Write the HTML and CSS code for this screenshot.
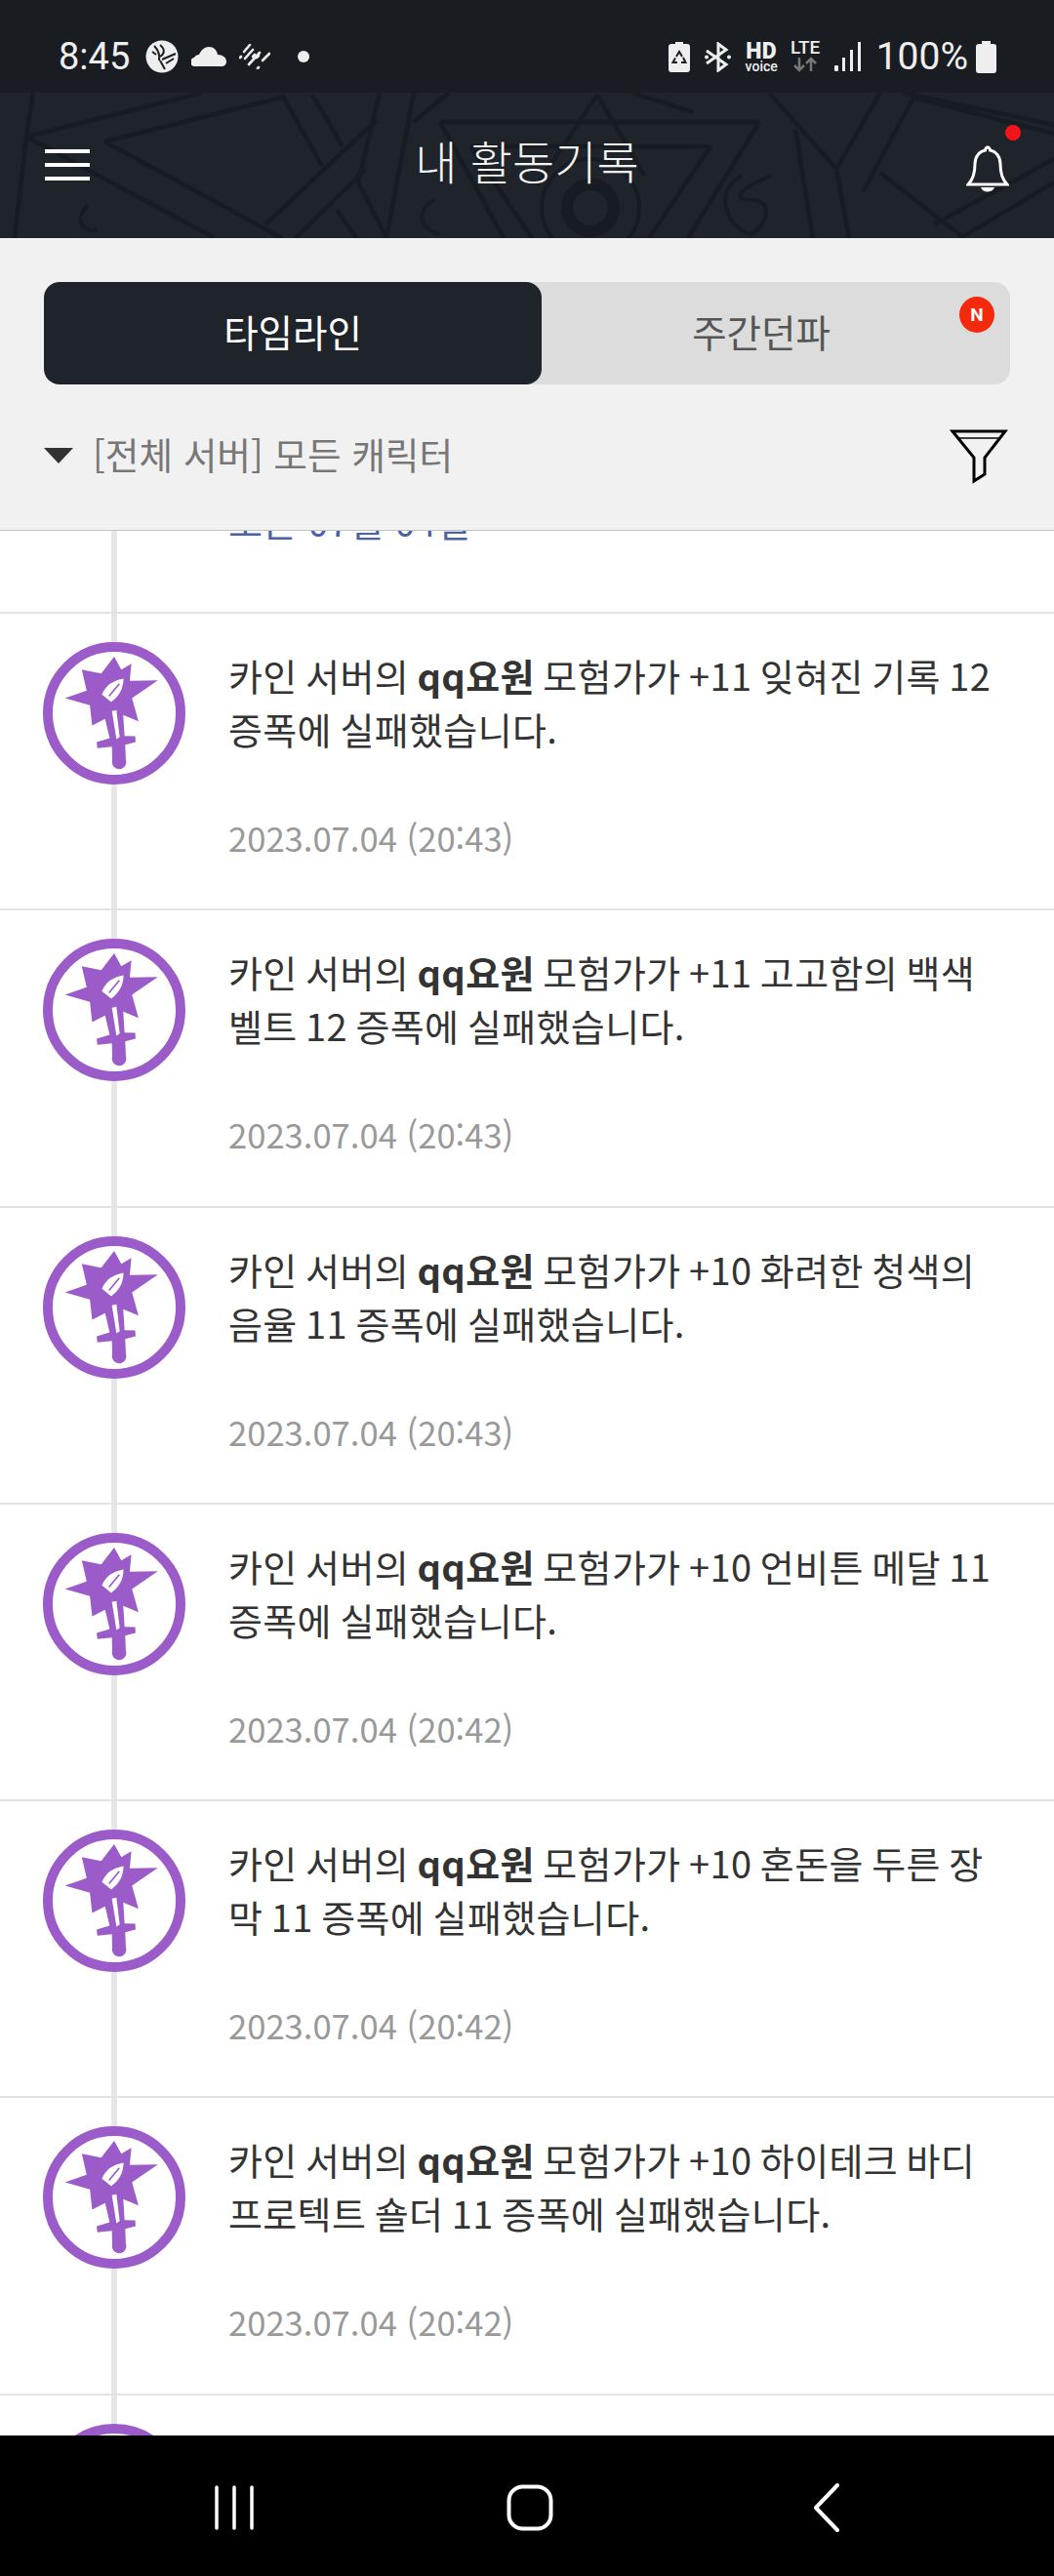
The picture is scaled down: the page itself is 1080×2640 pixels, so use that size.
FILE: index.html
```html
<!DOCTYPE html>
<html lang="ko">
<head>
<meta charset="utf-8">
<title>내 활동기록</title>
<link rel="stylesheet" href="styles.css">
</head>
<body>
<svg class="defs" width="0" height="0" aria-hidden="true">
  <symbol id="guild" viewBox="70 55 440 440">
    <circle cx="290" cy="275" r="205" fill="#fff" stroke="#9b5bc9" stroke-width="30"/>
    <path fill="#9b5bc9" d="M290 100 L312 140 L343 122 L338 175 L425 173 L345 228 L365 300 L318 280 L322 345 L355 346 L356 364 L324 372 L326 418 A22 22 0 1 1 284 420 L283 378 L238 383 L236 364 L276 352 L262 292 L222 313 L215 250 L138 228 L205 205 L190 140 L250 152 Z"/>
    <path fill="#fff" d="M319 168 C290 174 266 184 252 217 L281 240 C305 222 318 200 319 168 Z"/>
    <path fill="none" stroke="#9b5bc9" stroke-width="5" d="M274 222 L306 184"/>
    <path fill="#fff" d="M283 268 L297 265 L307 348 L297 355 Z"/>
  </symbol>
</svg>

<div class="phone">
  <div class="status">
    <div class="status-left">
      <span class="clock">8:45</span>
      <svg class="ic" width="34" height="34" viewBox="0 0 34 34"><circle cx="17" cy="17" r="16.5" fill="#eee"/><path d="M9 6 C13 10 15 14 14 21 M15 5 C20 9 20 14 15 17 M11 15 L7 12 M17 20 L31 14 M21 24 L29 19 M15 21 L20 30" fill="none" stroke="#1a1d22" stroke-width="2"/></svg>
      <svg class="ic" width="36" height="20" viewBox="0 0 36 20"><path fill="#eee" d="M4 20 A4.5 4.5 0 0 1 3 11 C4 9 6 8 8 8 C10 3 14 0 18 0 C23 0 26 3 27 8 C32 8 36 11 36 15 C36 18 34 20 31 20 Z"/></svg>
      <svg class="ic" width="32" height="26" viewBox="0 0 32 26"><g stroke="#eee" stroke-width="2.6" stroke-linecap="round"><path d="M5 8 L11 1"/><path d="M1 14 L2 13"/><path d="M6 15 L14 6"/><path d="M10 21 L21 9"/><path d="M18 14 L20 12"/><path d="M19 25 L20 24"/><path d="M24 17 L31 10"/><path d="M14 13 L16 11"/></g></svg>
      <svg class="ic dot" width="12" height="12" viewBox="0 0 12 12"><circle cx="6" cy="6" r="6" fill="#eee"/></svg>
    </div>
    <div class="status-right">
      <svg class="ic" width="22" height="31" viewBox="0 0 22 31"><path fill="#eee" d="M7 0 H15 V2 H19 Q22 2 22 5 V28 Q22 31 19 31 H3 Q0 31 0 28 V5 Q0 2 3 2 H7 Z"/><path fill="none" stroke="#1a1d22" stroke-width="2" d="M8 15 L11 10 L14 15 M15 16 L17.5 21 H13 M9 21 H4.500 L7 16.500"/></svg>
      <svg class="ic bt" width="27" height="31" viewBox="0 0 27 31"><path fill="none" stroke="#eee" stroke-width="3" d="M2 9 L22 23 L14 29 V2 L22 8 L2 22"/><circle cx="2" cy="15.500" r="2" fill="#eee"/><circle cx="25" cy="15.500" r="2" fill="#eee"/></svg>
      <span class="hd"><b>HD</b><i>voice</i></span>
      <span class="lte"><b>LTE</b><svg width="24" height="16" viewBox="0 0 24 16"><path fill="none" stroke="#777" stroke-width="2.500" d="M6 1 V14 M1 9 L6 14 L11 9 M18 15 V2 M13 7 L18 2 L23 7"/></svg></span>
      <svg class="ic" width="27" height="30" viewBox="0 0 27 30"><rect x="0" y="24" width="4" height="6" rx="1" fill="#eee"/><rect x="8" y="16" width="3" height="14" fill="#eee"/><rect x="16" y="8" width="3" height="22" fill="#eee"/><rect x="24" y="0" width="3" height="30" fill="#eee"/></svg>
      <span class="pct">100%</span>
      <svg class="ic batt" width="21" height="33" viewBox="0 0 21 33"><path fill="#eee" d="M6 0 H15 V3 H18 Q21 3 21 6 V30 Q21 33 18 33 H3 Q0 33 0 30 V6 Q0 3 3 3 H6 Z"/></svg>
    </div>
  </div>

  <header class="topbar">
    <svg class="pattern" viewBox="0 95 1080 149" preserveAspectRatio="none" aria-hidden="true">
      <g fill="none" stroke="#181b21" stroke-width="4.500">
        <path d="M34 95 L27 140 L15 244"/>
        <path d="M27 140 L207 95 M107 145 L289 100"/>
        <path d="M27 140 L220 244 M107 145 L289 244"/>
        <path d="M289 97 L330 170 M320 97 L351 150"/>
        <path d="M272 230 L386 123 M303 244 L375 173"/>
        <path d="M389 95 L367 187 L396 244 L424 95"/>
        <path d="M424 125 L460 95 M345 215 L365 244"/>
        <path d="M451 125 H778 M482 150 H728"/>
        <path d="M451 125 L516 244 M482 150 L545 244"/>
        <path d="M778 125 L705 244 M728 150 L665 244"/>
        <path d="M612 97 L550 190 M612 97 L660 180 M648 95 L710 115"/>
        <path d="M788 95 L857 173 L870 244 M815 133 L833 244"/>
        <path d="M902 95 L857 173 M936 100 L884 197"/>
        <path d="M936 100 L1080 137 M925 95 L1080 128"/>
        <path d="M902 177 L988 244 M957 230 L1080 163 M984 244 L1080 187"/>
        <circle cx="605" cy="213" r="24" stroke-width="12"/>
        <circle cx="605" cy="213" r="50" stroke-width="4"/>
        <path d="M760 180 C730 195 745 235 770 240 C790 225 790 205 770 205 C750 205 755 195 790 180" stroke-width="4"/>
        <path d="M445 205 C425 215 430 235 450 240 M90 210 C75 225 85 240 100 235" stroke-width="4"/>
      </g>
    </svg>
    <div class="burger"><span></span><span></span><span></span></div>
    <h1 class="title">내 활동기록</h1>
    <div class="bell-wrap">
      <svg width="44" height="50" viewBox="0 0 44 50"><path fill="none" stroke="#fff" stroke-width="3" d="M2 41 C8 35 9 28 9 20 C9 12 14 7 19.500 6 A2.500 3 0 0 1 24.500 6 C30 7 35 12 35 20 C35 28 36 35 42 41 Z"/><path fill="#fff" d="M15 44 H29 C27 50 17 50 15 44 Z"/></svg>
      <span class="bell-dot"></span>
    </div>
  </header>

  <section class="controls">
    <div class="tabs">
      <div class="tab tab-active">타임라인</div>
      <div class="tab tab-idle">주간던파<span class="badge">N</span></div>
    </div>
    <div class="filter-row">
      <div class="filter-label"><span class="caret"></span><span>[전체 서버] 모든 캐릭터</span></div>
      <svg width="60" height="56" viewBox="0 0 60 56"><path fill="none" stroke="#000" stroke-width="3" stroke-linejoin="miter" d="M3 2 H57 L36 29 V46 L25 53 V29 Z"/><path stroke="#000" stroke-width="1.500" d="M10 9 H50"/></svg>
    </div>
  </section>

  <main class="feed">
    <div class="stub"><p class="link">오른 07월 04일</p></div>

    <article class="row">
      <svg class="avatar"><use href="#guild"/></svg>
      <div class="body">
        <p class="msg">카인 서버의 <b>qq요원</b> 모험가가 +11 잊혀진 기록 12 증폭에 실패했습니다.</p>
        <time class="date">2023.07.04 (20:43)</time>
      </div>
    </article>
    <article class="row">
      <svg class="avatar"><use href="#guild"/></svg>
      <div class="body">
        <p class="msg">카인 서버의 <b>qq요원</b> 모험가가 +11 고고함의 백색 벨트 12 증폭에 실패했습니다.</p>
        <time class="date">2023.07.04 (20:43)</time>
      </div>
    </article>
    <article class="row">
      <svg class="avatar"><use href="#guild"/></svg>
      <div class="body">
        <p class="msg">카인 서버의 <b>qq요원</b> 모험가가 +10 화려한 청색의 음율 11 증폭에 실패했습니다.</p>
        <time class="date">2023.07.04 (20:43)</time>
      </div>
    </article>
    <article class="row">
      <svg class="avatar"><use href="#guild"/></svg>
      <div class="body">
        <p class="msg">카인 서버의 <b>qq요원</b> 모험가가 +10 언비튼 메달 11 증폭에 실패했습니다.</p>
        <time class="date">2023.07.04 (20:42)</time>
      </div>
    </article>
    <article class="row">
      <svg class="avatar"><use href="#guild"/></svg>
      <div class="body">
        <p class="msg">카인 서버의 <b>qq요원</b> 모험가가 +10 혼돈을 두른 장막 11 증폭에 실패했습니다.</p>
        <time class="date">2023.07.04 (20:42)</time>
      </div>
    </article>
    <article class="row">
      <svg class="avatar"><use href="#guild"/></svg>
      <div class="body">
        <p class="msg">카인 서버의 <b>qq요원</b> 모험가가 +10 하이테크 바디 프로텍트 숄더 11 증폭에 실패했습니다.</p>
        <time class="date">2023.07.04 (20:42)</time>
      </div>
    </article>
    <article class="row">
      <svg class="avatar"><use href="#guild"/></svg>
    </article>
  </main>

  <nav class="navbar">
    <svg width="40" height="46" viewBox="0 0 40 46"><g stroke="#fff" stroke-width="3.500" stroke-linecap="round"><path d="M2 2 V44 M20 2 V44 M38 2 V44"/></g></svg>
    <svg width="48" height="48" viewBox="0 0 48 48"><rect x="2.500" y="2.500" width="43" height="43" rx="14" fill="none" stroke="#fff" stroke-width="4"/></svg>
    <svg class="nav-back" width="28" height="50" viewBox="0 0 28 50"><path d="M25 2 L3 25 L25 48" fill="none" stroke="#fff" stroke-width="4" stroke-linecap="round" stroke-linejoin="round"/></svg>
  </nav>
</div>
</body>
</html>
```

FILE: styles.css
```css
* { box-sizing: border-box; }
html, body { margin: 0; padding: 0; background: #fff; }
body { font-family: "Noto Sans CJK KR", "Noto Sans", sans-serif; }
.defs { position: absolute; }

.phone {
  width: 1080px;
  height: 2640px;
  display: flex;
  flex-direction: column;
  overflow: hidden;
}

/* status bar */
.status {
  height: 95px;
  flex: none;
  background: #191c21;
  color: #eee;
  display: flex;
  justify-content: space-between;
  align-items: center;
  padding: 21px 59px 0 60px;
  font-family: Roboto, sans-serif;
}
.status-left, .status-right { display: flex; align-items: center; }
.status-left { gap: 13px; }
.status-right { gap: 13px; }
.ic { display: block; flex: none; }
.clock { font-size: 38px; line-height: 44px; margin-right: 3px; }
.dot { margin-left: 15px; }
.bt { margin: 0 2px 0 2px; }
.hd { display: flex; flex-direction: column; align-items: center; width: 33px; line-height: 1; margin-right: -1px; }
.hd b { font-size: 23px; line-height: 19px; font-weight: 900; letter-spacing: 0.5px; }
.hd i { font-size: 14px; line-height: 12px; font-style: normal; font-weight: 500; }
.lte { display: flex; flex-direction: column; align-items: center; width: 33px; margin-top: -2px; }
.lte b { font-size: 19px; line-height: 18px; font-weight: 500; }
.lte svg { display: block; }
.pct { font-size: 39px; line-height: 44px; margin-left: 3px; }
.batt { margin-left: -5px; }

/* top bar */
.topbar {
  position: relative;
  height: 149px;
  flex: none;
  background: #1f232a;
  display: grid;
  grid-template-columns: 1fr auto 1fr;
  align-items: center;
  padding: 0 40px 6px;
  color: #fff;
}
.pattern { position: absolute; left: 0; top: 0; width: 1080px; height: 149px; }
.burger { position: relative; display: flex; flex-direction: column; gap: 10px; width: 46px; margin: 4px 0 0 6px; }
.burger span { display: block; height: 4px; background: #fff; }
.title {
  position: relative;
  margin: 0 0 6px;
  font-size: 47px;
  line-height: 60px;
  font-weight: 300;
  color: #f4f4f4;
  white-space: nowrap;
}
.bell-wrap { position: relative; justify-self: end; width: 56px; height: 50px; margin: 12px -6px 0 0; }
.bell-dot { position: absolute; right: 0; top: -20px; width: 16px; height: 16px; border-radius: 50%; background: #f3141a; }

/* tabs and filter */
.controls {
  height: 300px;
  flex: none;
  background: #f1f1f1;
  border-bottom: 1px solid #c4c4c4;
  padding: 45px 45px 0;
}
.tabs { display: flex; height: 105px; }
.tab {
  width: 510px;
  display: flex;
  align-items: center;
  justify-content: center;
  border-radius: 16px;
  font-size: 38.5px;
  padding-bottom: 6px;
}
.tab-active { position: relative; z-index: 1; background: #1f232a; color: #fff; }
.tab-idle { position: relative; margin-left: -30px; background: #dcdcdc; color: #555; }
.badge {
  position: absolute;
  right: 16px;
  top: 15px;
  width: 36px;
  height: 37px;
  border-radius: 50%;
  background: #f52a0c;
  color: #fff;
  font-family: Roboto, sans-serif;
  font-weight: 700;
  font-size: 19px;
  display: flex;
  align-items: center;
  justify-content: center;
}
.filter-row {
  display: flex;
  justify-content: space-between;
  align-items: center;
  height: 56px;
  margin-top: 46px;
  margin-right: 2px;
}
.filter-label { display: flex; align-items: center; gap: 20px; font-size: 37.7px; line-height: 56px; color: #777; white-space: nowrap; margin-top: -6px; }
.caret { width: 0; height: 0; border-left: 15px solid transparent; border-right: 15px solid transparent; border-top: 16px solid #333; margin-top: 4px; }

/* feed */
.feed { position: relative; flex: 1; min-height: 0; overflow: hidden; background: #fff; }
.feed::before {
  content: "";
  position: absolute;
  left: 114px;
  top: 0;
  bottom: 0;
  width: 6px;
  background: #e6e6e6;
}
.stub { position: relative; display: flow-root; height: 85px; border-bottom: 2px solid #e2e2e2; padding-left: 234px; }
.link { margin: -38px 0 0; font-size: 38px; line-height: 55px; letter-spacing: 0.3px; color: #4a62a8; }
.row {
  position: relative;
  height: 304.3px;
  border-bottom: 2px solid #e2e2e2;
  display: flex;
  gap: 44px;
  padding: 29px 45px 0 44px;
}
.avatar { flex: none; width: 146px; height: 146px; }
.body { flex: 1; min-width: 0; }
.msg {
  margin: 6px 0 0;
  font-size: 38px;
  line-height: 55px;
  letter-spacing: 0.35px;
  word-spacing: -2.5px;
  color: #333;
  word-break: break-all;
}
.msg b { font-weight: 700; }
.date {
  display: block;
  margin-top: 59px;
  font-size: 34.6px;
  line-height: 50px;
  color: #999;
}

/* nav bar */
.navbar {
  height: 144px;
  flex: none;
  background: #000;
  display: flex;
  align-items: center;
  gap: 259px;
  padding: 4px 0 0 220px;
}
.nav-back { margin-left: 7px; }
```
